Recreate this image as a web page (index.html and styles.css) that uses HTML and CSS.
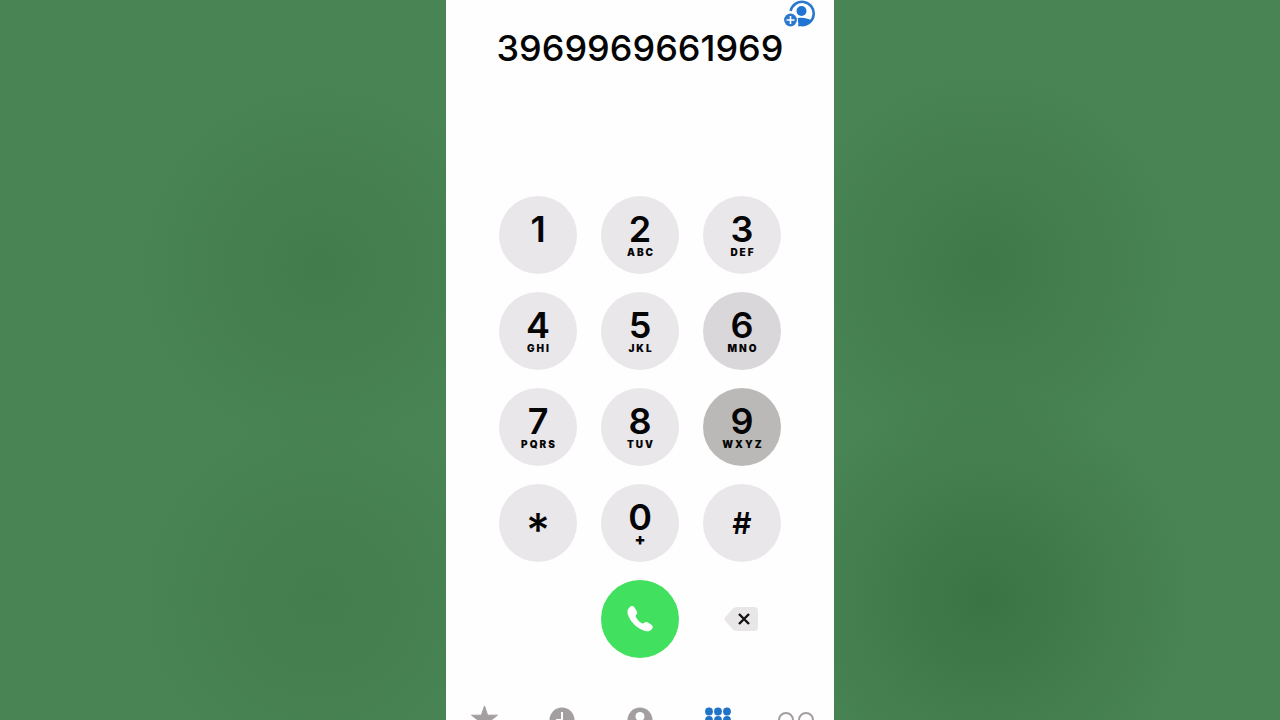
FILE: index.html
```
<!DOCTYPE html>
<html lang="en">
<head>
	<meta charset="UTF-8">
	<meta name="viewport" content="width=device-width, initial-scale=1">
	<title>Keypad</title>
	<link rel="stylesheet" href="styles.css">
</head>
<body>
	<main class="phone">
		<header class="display">
			<button class="add-contact" aria-label="Add contact">
				<svg width="32" height="28" viewBox="0 0 32 28">
					<path d="M6.600 11A11.700 11.700 0 1 1 18 25.200" fill="none" stroke="#2b78cc" stroke-width="2.600"/>
					<circle cx="17.500" cy="11" r="5" fill="#1f74d4"/>
					<path d="M14 26.200C15 23 14 20.500 12 19C15 17 22 17 27.500 20.500C24.500 24.500 19.500 27 14 26.200Z" fill="#1f74d4"/>
					<circle cx="6.500" cy="20" r="7.500" fill="#fff"/>
					<circle cx="6.500" cy="20" r="6.400" fill="#2b78cc"/>
					<path d="M6.500 16v8M2.500 20h8" stroke="#fff" stroke-width="1.600"/>
				</svg>
			</button>
			<output class="number">3969969661969</output>
		</header>

		<div class="keypad">
			<button class="key"><span class="digit">1</span><span class="letters"></span></button>
			<button class="key"><span class="digit">2</span><span class="letters">ABC</span></button>
			<button class="key"><span class="digit">3</span><span class="letters">DEF</span></button>
			<button class="key"><span class="digit">4</span><span class="letters">GHI</span></button>
			<button class="key"><span class="digit">5</span><span class="letters">JKL</span></button>
			<button class="key fading"><span class="digit">6</span><span class="letters">MNO</span></button>
			<button class="key"><span class="digit">7</span><span class="letters">PQRS</span></button>
			<button class="key"><span class="digit">8</span><span class="letters">TUV</span></button>
			<button class="key pressed"><span class="digit">9</span><span class="letters">WXYZ</span></button>
			<button class="key"><span class="star">*</span></button>
			<button class="key"><span class="digit">0</span><span class="letters plus">+</span></button>
			<button class="key"><span class="hash">#</span></button>

			<button class="key call" aria-label="Call">
				<svg width="28" height="28" viewBox="0 0 28 28">
					<path d="M4.500 1.500C6 0.600 7.500 1 8.500 2.500L10.800 6.200C11.600 7.700 11.300 8.800 10.300 9.800C9.400 10.700 9.500 11.600 10.200 12.700C11.600 14.800 13.400 16.600 15.400 17.900C16.500 18.600 17.400 18.600 18.300 17.700C19.300 16.800 20.500 16.600 21.800 17.400L25.400 19.700C26.800 20.700 27.200 22 26.300 23.500C24.800 25.800 22 27 19 26C10.500 23.300 4 16.500 1.700 9C0.800 6 2 3 4.500 1.500Z" fill="#fff"/>
				</svg>
			</button>
			<button class="delete" aria-label="Delete">
				<svg width="36" height="24" viewBox="0 0 36 24">
					<path d="M1 10.500L8 2.500Q10 0 13 0H30Q34 0 34 4V20Q34 24 30 24H13Q10 24 8 21.500L1 13.500Q0 12 1 10.500Z" fill="#e8e6e7"/>
					<path d="M15 7L25 17M25 7L15 17" stroke="#111" stroke-width="2.400"/>
				</svg>
			</button>
		</div>

		<nav class="tabs">
			<a href="#favorites" aria-label="Favorites">
				<svg width="28" height="28" viewBox="0 0 28 28">
					<path d="M13.500 0L16.600 9.200H26.500L18.700 15.200L21.700 25L13.500 19.200L5.300 25L8.300 15.200L0.500 9.200H10.400Z" fill="#a39fa1" stroke="#a39fa1" stroke-linejoin="round"/>
				</svg>
			</a>
			<a href="#recents" aria-label="Recents">
				<svg width="28" height="28" viewBox="0 0 28 28">
					<circle cx="14" cy="14" r="12.500" fill="#a39fa1"/>
					<path d="M14 6V14H8" fill="none" stroke="#fff" stroke-width="2"/>
				</svg>
			</a>
			<a href="#contacts" aria-label="Contacts">
				<svg width="28" height="28" viewBox="0 0 28 28">
					<circle cx="14" cy="14" r="12.500" fill="#a39fa1"/>
					<circle cx="14" cy="10.500" r="4.500" fill="#fff"/>
					<path d="M6 21C8 16.500 20 16.500 22 21C18 25.500 10 25.500 6 21Z" fill="#fff"/>
				</svg>
			</a>
			<a href="#keypad" aria-label="Keypad">
				<svg width="28" height="28" viewBox="0 0 28 28" fill="#1f74c8">
					<circle cx="5" cy="5.500" r="3.900"/><circle cx="14" cy="5.500" r="3.900"/><circle cx="23" cy="5.500" r="3.900"/>
					<circle cx="5" cy="14" r="3.900"/><circle cx="14" cy="14" r="3.900"/><circle cx="23" cy="14" r="3.900"/>
					<circle cx="5" cy="22.500" r="3.900"/><circle cx="14" cy="22.500" r="3.900"/><circle cx="23" cy="22.500" r="3.900"/>
				</svg>
			</a>
			<a href="#voicemail" aria-label="Voicemail">
				<svg width="40" height="28" viewBox="0 0 40 28" fill="none" stroke="#a39fa1" stroke-width="2">
					<circle cx="11" cy="14" r="7"/><circle cx="31" cy="14" r="7"/>
					<path d="M11 21H31"/>
				</svg>
			</a>
		</nav>
	</main>
</body>
</html>
```
FILE: styles.css
```
*{
	margin: 0;
	padding: 0;
	box-sizing: border-box;
}
body{
	min-height: 100vh;
	font-family: Inter, "Liberation Sans", sans-serif;
	color: #050505;
	background:
		radial-gradient(circle at 25% 37%, rgba(60,118,70,0.6), rgba(60,118,70,0) 190px),
		radial-gradient(circle at 25% 83%, rgba(60,118,70,0.5), rgba(60,118,70,0) 190px),
		radial-gradient(circle at 77% 37%, rgba(58,116,68,0.7), rgba(58,116,68,0) 200px),
		radial-gradient(circle at 77% 83%, rgba(56,114,66,0.9), rgba(56,114,66,0) 210px),
		#498455;
}
button{
	border: 0;
	background: none;
	font-family: inherit;
	color: inherit;
	cursor: pointer;
}
svg{
	display: block;
}
.phone{
	display: flex;
	flex-direction: column;
	max-width: 388px;
	height: 100vh;
	margin: 0 auto;
	overflow: hidden;
	background: #fefefe;
}
.display{
	display: flex;
	flex-direction: column;
	align-items: center;
}
.add-contact{
	align-self: flex-end;
	margin-right: 18px;
}
.number{
	font-size: 36px;
	line-height: 40px;
	font-weight: 500;
}

.keypad{
	display: grid;
	grid-template-columns: repeat(3, 78px);
	grid-auto-rows: 78px;
	gap: 18px 24px;
	justify-content: center;
	margin-top: 128px;
}
.key{
	display: flex;
	flex-direction: column;
	align-items: center;
	justify-content: center;
	padding-bottom: 2px;
	border-radius: 50%;
	background: #eae7eb;
}
.fading{
	background: #dad7da;
}
.pressed{
	background: #bab9b8;
}
.digit{
	font-size: 36px;
	line-height: 36px;
	font-weight: 600;
}
.letters{
	height: 10px;
	padding-left: 2px;
	font-size: 10px;
	line-height: 10px;
	font-weight: 900;
	letter-spacing: 2px;
}
.plus{
	font-size: 16px;
	line-height: 8px;
}
.star{
	padding-top: 16px;
	font-size: 46px;
	line-height: 46px;
	font-weight: 500;
}
.hash{
	padding-top: 2px;
	font-size: 30px;
	line-height: 30px;
	font-weight: 600;
}
.call{
	grid-column: 2;
	padding: 0;
	background: #41e05f;
}
.delete{
	display: flex;
	align-items: center;
	justify-content: center;
}

.tabs{
	display: grid;
	grid-template-columns: repeat(5, 1fr);
	justify-items: center;
	margin-top: 48px;
}
```
